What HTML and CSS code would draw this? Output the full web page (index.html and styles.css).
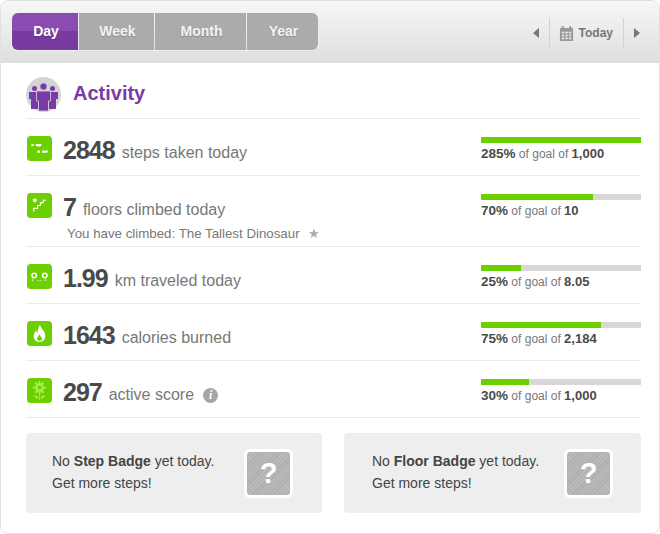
FILE: index.html
```html
<!DOCTYPE html>
<html lang="en">
<head>
    <meta charset="UTF-8">
    <title>Activity</title>
    <link rel="stylesheet" href="styles.css">
</head>
<body>
    <div class="card">
        <div class="topbar">
            <div class="tabs">
                <div class="tab tab-day active">Day</div>
                <div class="tab tab-week">Week</div>
                <div class="tab tab-month">Month</div>
                <div class="tab tab-year">Year</div>
            </div>
            <div class="pager">
                <svg class="arrow" width="6" height="10" viewBox="0 0 6 10"><path d="M6 0V10L0 5Z" fill="#777"/></svg>
                <div class="today">
                    <svg width="15" height="15" viewBox="0 0 16 16"><path fill="#999" fill-rule="evenodd" d="M1 2H3V0H5V2H11V0H13V2H15V16H1ZM3 6V8H5.500V6ZM6.700 6V8H9.300V6ZM10.500 6V8H13V6ZM3 9.200V11H5.500V9.200ZM6.700 9.200V11H9.300V9.200ZM10.500 9.200V11H13V9.200ZM3 12.200V14H5.500V12.200ZM6.700 12.200V14H9.300V12.200ZM10.500 12.200V14H13V12.200Z"/></svg>
                    <span>Today</span>
                </div>
                <svg class="arrow" width="6" height="10" viewBox="0 0 6 10"><path d="M0 0V10L6 5Z" fill="#777"/></svg>
            </div>
        </div>

        <div class="content">
            <div class="heading">
                <svg class="heading-icon" width="35" height="35" viewBox="0 0 35 35">
                    <circle cx="17.500" cy="17.500" r="17.500" fill="#d4d4d4"/>
                    <g fill="#7a3ba6">
                        <circle cx="8.500" cy="11.500" r="2.500"/>
                        <circle cx="26.500" cy="11.500" r="2.500"/>
                        <path d="M3 15H14V22H12V32H5V22H3Z"/>
                        <path d="M21 15H32V22H30V32H23V22H21Z"/>
                    </g>
                    <circle cx="17.500" cy="9.500" r="3.500" fill="#7a3ba6" stroke="#d4d4d4" stroke-width=".6"/>
                    <path d="M10.500 14H24.500V24H22.500V34H12.500V24H10.500Z" fill="#7a3ba6" stroke="#d4d4d4" stroke-width=".8"/>
                </svg>
                <h1>Activity</h1>
            </div>

            <div class="row">
                <div class="stat">
                    <svg class="stat-icon" width="25" height="25" viewBox="0 0 26 26">
                        <rect width="26" height="26" rx="4" fill="#6ccf00"/>
                        <path fill="#fff" d="M4.500 8.500H7.300V10.500H4.500ZM9 8.300H15V10.200L13.500 11H10.500L9 10ZM10.700 15H13.500V17.500H10.700ZM16 15H22L21 17.500H15.500Z"/>
                    </svg>
                    <div class="stat-text">
                        <div class="stat-line"><b>2848</b><span>steps taken today</span></div>
                    </div>
                </div>
                <div class="goal">
                    <div class="bar"><div class="fill" style="width: 100%"></div></div>
                    <p><b>285%</b> of goal of <b>1,000</b></p>
                </div>
            </div>

            <div class="row row-tall">
                <div class="stat">
                    <svg class="stat-icon" width="25" height="25" viewBox="0 0 26 26">
                        <rect width="26" height="26" rx="4" fill="#6ccf00"/>
                        <path fill="none" stroke="#fff" stroke-width="1.200" d="M7 19.500V16H11V13H14V10H17V7.500H20"/>
                        <path fill="#fff" d="M6 6H10V8L9 9.500H7V8H6Z"/>
                    </svg>
                    <div class="stat-text">
                        <div class="stat-line"><b>7</b><span>floors climbed today</span></div>
                        <div class="stat-note">You have climbed: The Tallest Dinosaur<span class="star">★</span></div>
                    </div>
                </div>
                <div class="goal">
                    <div class="bar"><div class="fill" style="width: 70%"></div></div>
                    <p><b>70%</b> of goal of <b>10</b></p>
                </div>
            </div>

            <div class="row">
                <div class="stat">
                    <svg class="stat-icon" width="25" height="25" viewBox="0 0 26 26">
                        <rect width="26" height="26" rx="4" fill="#6ccf00"/>
                        <circle cx="7.500" cy="12" r="2.300" fill="none" stroke="#fff" stroke-width="1.600"/>
                        <circle cx="18.500" cy="12" r="2.300" fill="none" stroke="#fff" stroke-width="1.600"/>
                        <path fill="#fff" d="M5 16H6.500V17.500H5ZM11.500 17H12.500V18H11.500ZM14 17H15V18H14ZM18.500 16H20V17.500H18.500Z"/>
                    </svg>
                    <div class="stat-text">
                        <div class="stat-line"><b>1.99</b><span>km traveled today</span></div>
                    </div>
                </div>
                <div class="goal">
                    <div class="bar"><div class="fill" style="width: 25%"></div></div>
                    <p><b>25%</b> of goal of <b>8.05</b></p>
                </div>
            </div>

            <div class="row">
                <div class="stat">
                    <svg class="stat-icon" width="25" height="25" viewBox="0 0 26 26">
                        <rect width="26" height="26" rx="4" fill="#6ccf00"/>
                        <path fill="#fff" fill-rule="evenodd" d="M13.500 4C14 8 19 10 19 15.500C19 19.500 16.500 21.500 13 21.500C9.500 21.500 7 19.500 7 15.500C7 13 8.500 11.500 9.500 10C9.800 11.500 10.300 12.300 11 12.700C11 9.500 12 7 13.500 4ZM13 13.500C12.500 15.500 10.500 16.500 10.500 18.500C10.500 20 11.500 20.800 13 20.800C14.500 20.800 15.500 20 15.500 18.500C15.500 16.500 13.500 15.500 13 13.500Z"/>
                    </svg>
                    <div class="stat-text">
                        <div class="stat-line"><b>1643</b><span>calories burned</span></div>
                    </div>
                </div>
                <div class="goal">
                    <div class="bar"><div class="fill" style="width: 75%"></div></div>
                    <p><b>75%</b> of goal of <b>2,184</b></p>
                </div>
            </div>

            <div class="row">
                <div class="stat">
                    <svg class="stat-icon" width="25" height="25" viewBox="0 0 26 26">
                        <rect width="26" height="26" rx="4" fill="#6ccf00"/>
                        <g fill="#a4f04a">
                            <circle cx="13" cy="10" r="4.500"/>
                            <path d="M12 3H14V17H12ZM6 9H20V11H6ZM8 5.500L9.500 4L18 14.500L16.500 16ZM18 5.500L16.500 4L8 14.500L9.500 16Z"/>
                            <path d="M12.500 17H13.500V23H12.500ZM7 18C9.500 18 11.500 19 12 21.500C9.500 21.500 8 20.500 7 18ZM19 18C16.500 18 14.500 19 14 21.500C16.500 21.500 18 20.500 19 18Z"/>
                        </g>
                        <circle cx="13" cy="10" r="2" fill="#6ccf00"/>
                    </svg>
                    <div class="stat-text">
                        <div class="stat-line"><b>297</b><span>active score</span><i class="info">i</i></div>
                    </div>
                </div>
                <div class="goal">
                    <div class="bar"><div class="fill" style="width: 30%"></div></div>
                    <p><b>30%</b> of goal of <b>1,000</b></p>
                </div>
            </div>

            <div class="badges">
                <div class="badge badge-step">
                    <p>No <b>Step Badge</b> yet today.<br>Get more steps!</p>
                    <div class="badge-mark">?</div>
                </div>
                <div class="badge badge-floor">
                    <p>No <b>Floor Badge</b> yet today.<br>Get more steps!</p>
                    <div class="badge-mark">?</div>
                </div>
            </div>
        </div>
    </div>
</body>
</html>
```

FILE: styles.css
```css
* {
    box-sizing: border-box;
}
body {
    margin: 0;
    background: #fff;
    font-family: "Liberation Sans", Arial, sans-serif;
}
.card {
    width: 660px;
    height: 534px;
    border: 1px solid #e0e0e0;
    border-radius: 8px;
    overflow: hidden;
    background: #fff;
}
.topbar {
    height: 62px;
    padding: 12px 11px 0 11px;
    display: flex;
    justify-content: space-between;
    background: linear-gradient(#f7f7f7, #dedede);
}
.tabs {
    display: flex;
    height: 37px;
    border-radius: 6px;
    overflow: hidden;
    gap: 1px;
    box-shadow: 0 0 0 1px #eee;
}
.tab {
    display: flex;
    align-items: center;
    justify-content: center;
    padding: 0 0 2px 2px;
    background: #ababab;
    color: #f4f4f4;
    font-size: 14px;
    font-weight: bold;
    text-shadow: 0 1px 1px rgba(0,0,0,0.2);
}
.tab-day { width: 66px; }
.tab-week { width: 75px; }
.tab-month { width: 91px; }
.tab-year { width: 71px; }
.tab.active {
    color: #fff;
    background: linear-gradient(#8a4bb3 0, #8a4bb3 50%, #773aa0 50%, #773aa0 100%);
}
.pager {
    display: flex;
    align-items: center;
    height: 30px;
    margin-top: 5px;
    margin-right: 8px;
}
.today {
    display: flex;
    align-items: center;
    gap: 5px;
    height: 30px;
    margin: 0 10px;
    padding: 0 10px 0 9px;
    border-left: 1px solid #d2d2d2;
    border-right: 1px solid #d2d2d2;
    color: #777;
    font-size: 12px;
    font-weight: bold;
}
.content {
    padding: 0 18px 0 25px;
}
.heading {
    display: flex;
    align-items: center;
    gap: 12px;
    height: 56px;
    padding-top: 7px;
    border-bottom: 1px solid #eaeaea;
}
.heading h1 {
    margin: -1px 0 0;
    color: #7a3ba6;
    font-size: 20px;
    font-weight: bold;
}
.row {
    display: flex;
    justify-content: space-between;
    height: 57px;
    padding: 17px 0 0 1px;
    border-bottom: 1px solid #eaeaea;
}
.row-tall {
    height: 71px;
}
.stat {
    display: flex;
    gap: 11px;
}
.stat-icon {
    flex: none;
}
.stat-line {
    height: 29px;
    color: #777;
    font-size: 16px;
}
.stat-line b {
    margin-right: 7px;
    color: #4a4a4a;
    font-size: 25px;
    letter-spacing: -1px;
}
.stat-line span {
    vertical-align: 1px;
}
.stat-note {
    margin: 4px 0 0 4px;
    color: #777;
    font-size: 13.300px;
}
.star {
    margin-left: 8px;
    color: #aaa;
}
.info {
    display: inline-block;
    width: 15px;
    height: 15px;
    margin: 0 0 0 9px;
    border-radius: 50%;
    background: #a5a5a5;
    color: #fff;
    font-family: "Liberation Serif", serif;
    font-size: 12px;
    font-weight: bold;
    line-height: 15px;
    text-align: center;
    vertical-align: 2px;
}
.goal {
    width: 160px;
}
.bar {
    height: 6px;
    margin-top: 1px;
    background: #d8d8d8;
}
.fill {
    height: 100%;
    background: #6ccf00;
}
.goal p {
    margin: 3px 0 0;
    color: #777;
    font-size: 12px;
    line-height: 15px;
}
.goal b {
    color: #4a4a4a;
    font-size: 13px;
}
.goal p b:first-child {
    font-size: 13.500px;
}
.badges {
    display: flex;
    justify-content: space-between;
    margin-top: 15px;
}
.badge {
    display: flex;
    align-items: center;
    justify-content: space-between;
    height: 80px;
    border-radius: 4px;
    background: #eee;
}
.badge-step {
    width: 296px;
    padding: 0 29px 0 26px;
}
.badge-floor {
    width: 297px;
    padding: 0 28px 0 28px;
}
.badge p {
    margin: 0;
    padding-bottom: 2px;
    color: #444;
    font-size: 14px;
    line-height: 22px;
}
.badge-mark {
    width: 49px;
    height: 49px;
    border: 3px solid #fff;
    border-radius: 6px;
    background: repeating-linear-gradient(135deg, #adadad 0, #adadad 1px, #b9b9b9 1px, #b9b9b9 3px);
    color: #fff;
    font-size: 29px;
    font-weight: bold;
    line-height: 43px;
    text-align: center;
}
```
